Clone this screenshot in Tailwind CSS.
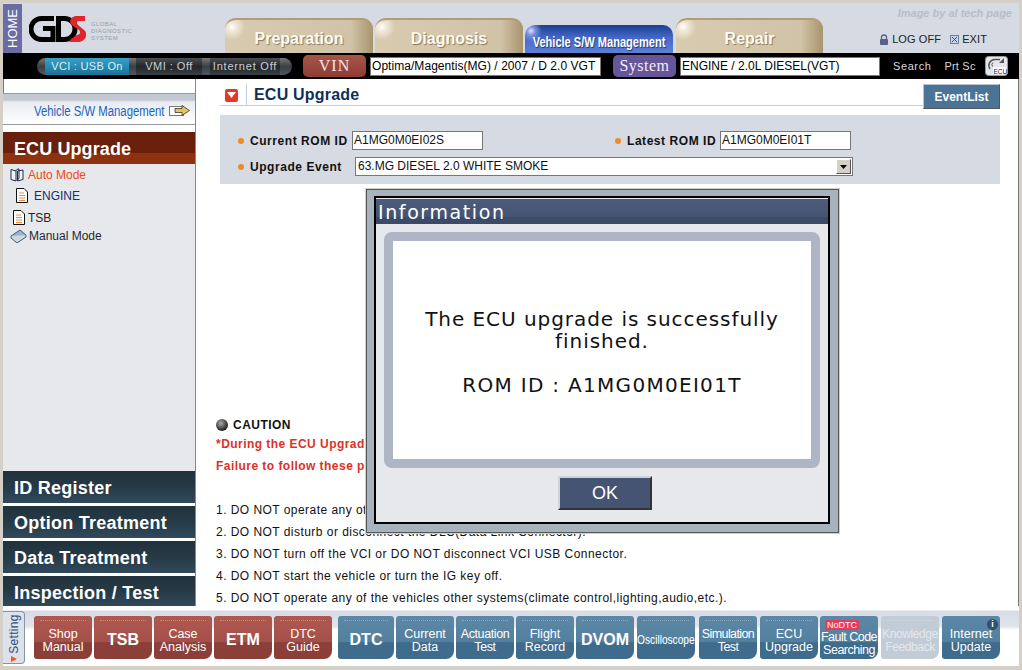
<!DOCTYPE html>
<html lang="en">
<head>
  <meta charset="UTF-8" />
  <title>GDS - ECU Upgrade</title>
  <script src="https://cdn.jsdelivr.net/npm/@tailwindcss/browser@4"></script>
</head>
<body class="bg-white font-['Liberation_Sans',Arial,sans-serif]">
<div class="relative w-[1022px] h-[670px] overflow-hidden flex flex-col bg-white border-t-[3px] border-l-[3px] border-r-[3px] border-b-[4px] border-[#d4d0c8] shadow-[inset_0_1px_0_#777,inset_1px_0_0_#777,inset_-1px_0_0_#777,inset_0_-1px_0_#777]">

  <!-- header -->
  <header class="h-[50px] shrink-0 flex bg-[#d5dae3]">
    <div class="w-[19px] mt-[1px] bg-[#6c6ca5] flex items-center justify-center">
      <span class="-rotate-90 text-white text-[13px] leading-none">HOME</span>
    </div>
    <div class="w-[203px] flex pl-[7px] pt-[13px] items-start">
      <svg width="57" height="26" viewBox="0 0 57 26" fill="none">
        <path d="M25 2.500H12.500a10 10 0 0 0 0 21H24V12.500H14" stroke="#000" stroke-width="5"/>
        <path d="M29.500 2.500h6a10.500 10.500 0 0 1 0 21h-6z" stroke="#000" stroke-width="5"/>
        <path d="M56 0H48c-7 0-9 7-4 10l6 4c2 2 1 5-2 5-3 2-7 4-8 7h9c7 0 11-8 6-12l-6-5c-2-2-1-4 1-4h6z" fill="#e0262b"/>
      </svg>
      <div class="ml-[5px] mt-[5px] text-[6px] leading-[7px] tracking-[0.4px] text-[#9a9fa8]">GLOBAL<br>DIAGNOSTIC<br>SYSTEM</div>
    </div>
    <nav class="flex items-end">
      <div class="w-[148px] h-[35px] mr-[2px] rounded-t-[11px] flex items-center justify-center pt-[5px] text-[16px] font-bold text-[#fbfaf5] [text-shadow:1px_1px_1px_#8a7a5a] border-t-[2px] border-[#b09c78] bg-[radial-gradient(circle_at_7px_7px,#fff_0,#efe6d4_5px,transparent_13px),linear-gradient(90deg,#d9cbb0_0,#d1c3a7_85%,#a8946e_100%)]">Preparation</div>
      <div class="w-[148px] h-[35px] mr-[2px] rounded-t-[11px] flex items-center justify-center pt-[5px] text-[16px] font-bold text-[#fbfaf5] [text-shadow:1px_1px_1px_#8a7a5a] border-t-[2px] border-[#b09c78] bg-[radial-gradient(circle_at_7px_7px,#fff_0,#efe6d4_5px,transparent_13px),linear-gradient(90deg,#d9cbb0_0,#d1c3a7_85%,#a8946e_100%)]">Diagnosis</div>
      <div class="w-[148px] h-[28px] mr-[3px] rounded-t-[10px] flex items-center justify-center pt-[6px] whitespace-nowrap text-[14px] font-bold text-white [text-shadow:1px_1px_1px_#1c3270] bg-[radial-gradient(circle_at_6px_6px,#dfe6ff_0,#7d95e0_4px,transparent_11px),linear-gradient(180deg,#1c3f90_0,#4468c8_45%,#5c80d8_100%)]"><span class="block scale-x-[0.79]">Vehicle S/W Management</span></div>
      <div class="w-[147px] h-[35px] rounded-t-[11px] flex items-center justify-center pt-[5px] text-[16px] font-bold text-[#fbfaf5] [text-shadow:1px_1px_1px_#8a7a5a] border-t-[2px] border-[#b09c78] bg-[radial-gradient(circle_at_7px_7px,#fff_0,#efe6d4_5px,transparent_13px),linear-gradient(90deg,#d9cbb0_0,#d1c3a7_85%,#a8946e_100%)]">Repair</div>
    </nav>
    <div class="flex-1 flex flex-col items-end pr-[7px] pt-[3px]">
      <div class="text-[11px] leading-[14px] font-bold italic text-[#b9bdc5]">Image by al tech page</div>
      <div class="flex items-center mt-[12px] mr-[25px] text-[11px] tracking-[0.1px] leading-[14px] text-[#222]">
        <svg width="10" height="11" viewBox="0 0 10 11" class="mr-[3px]"><path d="M2.500 5V3.500a2.500 2.500 0 0 1 5 0V5" stroke="#55628a" stroke-width="1.300" fill="none"/><rect x="1" y="5" width="8" height="6" rx="1" fill="#55628a"/></svg>
        <span>LOG OFF</span>
        <svg width="9" height="9" viewBox="0 0 9 9" class="ml-[9px] mr-[3px]"><rect x="0.500" y="0.500" width="8" height="8" fill="#c9d2e6" stroke="#6c7fa8"/><path d="M2 2l5 5M7 2l-5 5" stroke="#44557f"/></svg>
        <span>EXIT</span>
      </div>
    </div>
  </header>

  <!-- status bar -->
  <div class="h-[26px] shrink-0 bg-black flex items-center pl-[34px]">
    <div class="w-[255px] h-[17px] rounded-full flex items-center overflow-hidden text-[11px] tracking-[0.5px] text-[#c9ced4] bg-[linear-gradient(180deg,#777_0,#3a3f44_50%,#50565c_100%)]">
      <span class="ml-[8px] w-[84px] h-full flex items-center justify-center tracking-[0.3px] text-[#dbeef5] bg-[linear-gradient(180deg,#3aa0c8,#1a7296)]">VCI : USB On</span>
      <span class="ml-[7px] w-[66px] h-full flex items-center justify-center bg-[linear-gradient(180deg,#4a4f54,#23272b_50%,#3a3f44)]">VMI : Off</span>
      <span class="ml-[8px] w-[70px] h-full flex items-center justify-center tracking-[0.8px] bg-[linear-gradient(180deg,#4a4f54,#23272b_50%,#3a3f44)]">Internet Off</span>
    </div>
    <div class="ml-[11px] w-[63px] h-[22px] rounded-[5px] flex items-center justify-center text-[16px] tracking-[1px] text-[#f3e6e2] bg-[linear-gradient(180deg,#a85448,#8e3d34)] font-['Liberation_Serif',serif]">VIN</div>
    <div class="ml-[4px] w-[231px] h-[19px] bg-white border border-[#777] flex items-center pl-[1px] text-[12px] tracking-[0.05px] text-black">Optima/Magentis(MG) / 2007 / D 2.0 VGT</div>
    <div class="ml-[12px] w-[63px] h-[22px] rounded-[5px] flex items-center justify-center text-[16px] tracking-[0.5px] text-[#f0ecf6] bg-[#67559a] font-['Liberation_Serif',serif]">System</div>
    <div class="ml-[4px] w-[200px] h-[19px] bg-white border border-[#777] flex items-center pl-[1px] text-[12px] text-black">ENGINE / 2.0L DIESEL(VGT)</div>
    <span class="ml-[13px] text-[11px] tracking-[0.6px] text-[#d5d8dc]">Search</span>
    <span class="ml-[13px] text-[11px] tracking-[0.2px] text-[#d5d8dc]">Prt Sc</span>
    <svg width="23" height="20" viewBox="0 0 23 20" class="ml-[9px]"><rect x="0.500" y="0.500" width="22" height="19" rx="3" fill="#e3e6ea" stroke="#999"/><path d="M15 3.500H10a6 6 0 0 0-5 9.500" stroke="#555" stroke-width="1.500" fill="none"/><path d="M8 6.500a3 3 0 0 0-.5 4" stroke="#555" fill="none"/><path d="M14 7l5-5v5z" fill="#555"/><rect x="8" y="11" width="13" height="7" fill="#fff"/><text x="8.500" y="17.500" font-size="6.500" font-family="Liberation Sans" fill="#222">ECU</text></svg>
  </div>

  <div class="flex-1 min-h-0 flex">
    <!-- sidebar -->
    <aside class="w-[193px] shrink-0 flex flex-col border-r border-[#888] pt-[14px]">
      <div class="h-[32px] shrink-0 border-t border-b border-[#999] flex items-center pl-[31px] pt-[5px] whitespace-nowrap text-[14px] text-[#1c63bf] bg-[linear-gradient(180deg,#c3c9d3_0,#c3c9d3_6px,#e8ebf0_8px,#fff_100%)]">
        <span class="block w-[131px] origin-left scale-x-[0.81]">Vehicle S/W Management</span>
        <svg width="22" height="13" viewBox="0 0 22 13" class="ml-[4px] -mt-[3px] shrink-0"><rect x="0.500" y="2.500" width="14" height="9" fill="#fff" stroke="#777"/><path d="M6 4.500h7V1.500l7.500 5-7.500 5v-3H6z" fill="#e7c25e" stroke="#333" stroke-width="0.800"/></svg>
      </div>
      <div class="h-[7px] shrink-0 bg-white"></div>
      <div class="h-[32px] shrink-0 flex items-center pl-[11px] pt-[2px] text-[18px] font-bold tracking-[0.1px] text-white bg-[linear-gradient(180deg,#671f0b_0,#6c200c_65%,#8e310f_66%,#8e310f_100%)]">ECU Upgrade</div>
      <div class="flex-1 bg-[#e6e8ec] text-[12px] pt-[3px]">
        <div class="flex items-center h-[15px] pl-[7px]">
          <svg width="15" height="14" viewBox="0 0 15 14" class="shrink-0"><path d="M1 1.500l5 1.500v10L1 11.500zM13 2v9.500L7.500 13V3z" fill="#eef2f7" stroke="#1f2d45"/><path d="M6 3c0-1 1-2 3-2v9l-2 3" fill="none" stroke="#1f2d45"/></svg>
          <span class="ml-[3px] text-[#f0490f]">Auto Mode</span>
        </div>
        <div class="flex items-center h-[15px] mt-[6px] pl-[13px]">
          <svg width="12" height="15" viewBox="0 0 12 15" class="shrink-0"><path d="M0.500 0.500H8L11.500 4v10.500H0.500z" fill="#fff" stroke="#111"/><path d="M3 5h5M3 7.500h6M3 10h6M3 12.500h6" stroke="#f08a3c" stroke-width="1.200"/></svg>
          <span class="ml-[6px] text-[#1a2f6b]">ENGINE</span>
        </div>
        <div class="flex items-center h-[15px] mt-[7px] pl-[10px]">
          <svg width="12" height="15" viewBox="0 0 12 15" class="shrink-0"><path d="M0.500 0.500H8L11.500 4v10.500H0.500z" fill="#fff" stroke="#111"/><path d="M3 5h5M3 7.500h6M3 10h6M3 12.500h6" stroke="#f08a3c" stroke-width="1.200"/></svg>
          <span class="ml-[3px] text-[#222]">TSB</span>
        </div>
        <div class="flex items-center h-[15px] mt-[3px] pl-[7px]">
          <svg width="17" height="14" viewBox="0 0 17 14" class="shrink-0"><path d="M1 7l9-6 6 5-9 7z" fill="#8fb6d6" stroke="#4a5d70"/><path d="M1 7v2l6 5 9-6V6" fill="#cfd6dd" stroke="#4a5d70"/></svg>
          <span class="ml-[2px] text-[#222a33]">Manual Mode</span>
        </div>
      </div>
      <div class="shrink-0 flex flex-col gap-[3px] bg-white text-[18px] font-bold tracking-[0.25px] text-white">
        <div class="h-[32px] flex items-center pl-[11px] pt-[2px] bg-[linear-gradient(180deg,#20323c_0,#263a46_50%,#30495c_100%)]">ID Register</div>
        <div class="h-[32px] flex items-center pl-[11px] pt-[2px] bg-[linear-gradient(180deg,#20323c_0,#263a46_50%,#30495c_100%)]">Option Treatment</div>
        <div class="h-[32px] flex items-center pl-[11px] pt-[2px] bg-[linear-gradient(180deg,#20323c_0,#263a46_50%,#30495c_100%)]">Data Treatment</div>
        <div class="h-[30px] flex items-center pl-[11px] pt-[4px] bg-[linear-gradient(180deg,#20323c_0,#263a46_50%,#30495c_100%)]">Inspection / Test</div>
      </div>
    </aside>

    <!-- main -->
    <main class="flex-1 min-w-0 flex flex-col pl-[24px] pr-[19px]">
      <div class="h-[36px] shrink-0 flex">
        <div class="w-[703px] h-[27px] pt-[6px] flex items-center border-b border-[#c8ccd4]">
          <div class="ml-[5px] w-[13px] h-[13px] rounded-[2px] bg-[#e23a26] flex items-center justify-center">
            <svg width="9" height="6" viewBox="0 0 9 6"><path d="M0 0h9L4.500 6z" fill="#fff"/></svg>
          </div>
          <div class="ml-[8px] w-px h-[22px] bg-[#c8ccd4]"></div>
          <span class="ml-[7px] text-[16px] font-bold tracking-[0.2px] text-[#0f2f5c]">ECU Upgrade</span>
        </div>
        <div class="w-[77px] h-[25px] mt-[5px] flex items-center justify-center text-[12px] font-bold text-white bg-[#4b7396] border border-t-[#b9c4d0] border-l-[#b9c4d0] border-r-[#555] border-b-[#555]">EventList</div>
      </div>
      <section class="h-[69px] w-[780px] shrink-0 bg-[#d5dae3] pt-[16px] pl-[18px] text-[12px] font-bold tracking-[0.55px] text-[#111]">
        <div class="flex items-center h-[19px]">
          <span class="w-[6px] h-[6px] rounded-full bg-[#f08a24]"></span>
          <span class="ml-[6px] w-[102px]">Current ROM ID</span>
          <div class="w-[131px] h-[19px] bg-white border border-[#777] pl-[1px] leading-[17px] font-normal tracking-normal">A1MG0M0EI02S</div>
          <span class="ml-[132px] w-[6px] h-[6px] rounded-full bg-[#f08a24]"></span>
          <span class="ml-[6px] w-[93px]">Latest ROM ID</span>
          <div class="w-[131px] h-[19px] bg-white border border-[#777] pl-[1px] leading-[17px] font-normal tracking-normal">A1MG0M0EI01T</div>
        </div>
        <div class="flex items-center h-[19px] mt-[7px]">
          <span class="w-[6px] h-[6px] rounded-full bg-[#f08a24]"></span>
          <span class="ml-[6px] w-[105px]">Upgrade Event</span>
          <div class="w-[498px] h-[19px] bg-white border border-[#777] pl-[2px] pb-[1px] flex items-center justify-between font-normal tracking-normal">
            <span>63.MG DIESEL 2.0 WHITE SMOKE</span>
            <span class="w-[15px] h-[15px] mr-[1px] mt-[1px] bg-[#d4d0c8] border border-t-white border-l-white border-r-[#555] border-b-[#555] flex items-center justify-center">
              <svg width="7" height="4" viewBox="0 0 7 4"><path d="M0 0h7L3.500 4z" fill="#000"/></svg>
            </span>
          </div>
        </div>
      </section>
      <section class="mt-[233px] -ml-[4px] text-[12px] tracking-[0.46px] text-[#111]">
        <div class="flex items-center h-[16px] font-bold">
          <span class="w-[12px] h-[12px] rounded-full bg-[radial-gradient(circle_at_40%_35%,#aaa,#222_70%)]"></span>
          <span class="ml-[5px]">CAUTION</span>
        </div>
        <p class="mt-[2px] leading-[19px] font-bold text-[#dc3228]">*During the ECU Upgrade, do not interrupt the process.</p>
        <p class="mt-[3px] leading-[19px] font-bold text-[#dc3228]">Failure to follow these procedures may damage the ECU.</p>
        <ol class="mt-[23px] leading-[22px]">
          <li>1. DO NOT operate any other programs during the upgrade.</li>
          <li>2. DO NOT disturb or disconnect the DLC(Data Link Connector).</li>
          <li>3. DO NOT turn off the VCI or DO NOT disconnect VCI USB Connector.</li>
          <li>4. DO NOT start the vehicle or turn the IG key off.</li>
          <li>5. DO NOT operate any of the vehicles other systems(climate control,lighting,audio,etc.).</li>
        </ol>
      </section>
    </main>
  </div>

  <!-- bottom toolbar -->
  <footer class="h-[60px] shrink-0 flex items-start pt-[10px] text-white text-[12.500px] leading-[13px] text-center bg-[linear-gradient(180deg,#fff_0,#fff_4px,#d8dce6_5px,#dfe3ea_20px,#fff_24px)]">
    <div class="w-[22px] h-[53px] -mt-[5px] rounded-r-[4px] border border-l-0 border-[#8a93a3] bg-[#dde1e9] flex flex-col items-center justify-center">
      <span class="-rotate-90 text-[#2b4f80] text-[12px] tracking-[0.3px] leading-none mt-[14px] mb-[14px]">Setting</span>
      <svg width="6" height="6" viewBox="0 0 6 6" class="mt-[2px]"><path d="M0 0l6 3-6 3z" fill="#f05a20"/></svg>
    </div>
    <div class="ml-[9px] flex">
      <div class="relative w-[58px] h-[43px] mr-[2px] pt-[6px] rounded-t-[3px] rounded-bl-[3px] rounded-br-[8px] flex items-center justify-center bg-[linear-gradient(180deg,#ae584f_0,#a4504a_60%,#8b3f38_62%,#8b3f38_100%)]"><span class="absolute top-[4px] inset-x-[6px] border-t border-dotted border-white/30"></span>Shop<br>Manual</div>
      <div class="relative w-[58px] h-[43px] mr-[2px] pt-[4px] rounded-t-[3px] rounded-bl-[3px] rounded-br-[8px] flex items-center justify-center text-[16px] font-bold bg-[linear-gradient(180deg,#ae584f_0,#a4504a_60%,#8b3f38_62%,#8b3f38_100%)]"><span class="absolute top-[4px] inset-x-[6px] border-t border-dotted border-white/30"></span>TSB</div>
      <div class="relative w-[58px] h-[43px] mr-[2px] pt-[6px] rounded-t-[3px] rounded-bl-[3px] rounded-br-[8px] flex items-center justify-center bg-[linear-gradient(180deg,#ae584f_0,#a4504a_60%,#8b3f38_62%,#8b3f38_100%)]"><span class="absolute top-[4px] inset-x-[6px] border-t border-dotted border-white/30"></span>Case<br>Analysis</div>
      <div class="relative w-[58px] h-[43px] mr-[2px] pt-[4px] rounded-t-[3px] rounded-bl-[3px] rounded-br-[8px] flex items-center justify-center text-[16px] font-bold bg-[linear-gradient(180deg,#ae584f_0,#a4504a_60%,#8b3f38_62%,#8b3f38_100%)]"><span class="absolute top-[4px] inset-x-[6px] border-t border-dotted border-white/30"></span>ETM</div>
      <div class="relative w-[58px] h-[43px] mr-[6px] pt-[6px] rounded-t-[3px] rounded-bl-[3px] rounded-br-[8px] flex items-center justify-center bg-[linear-gradient(180deg,#ae584f_0,#a4504a_60%,#8b3f38_62%,#8b3f38_100%)]"><span class="absolute top-[4px] inset-x-[6px] border-t border-dotted border-white/30"></span>DTC<br>Guide</div>
      <div class="relative w-[56px] h-[43px] mr-[2px] pt-[4px] rounded-t-[3px] rounded-bl-[3px] rounded-br-[8px] flex items-center justify-center text-[16px] font-bold bg-[linear-gradient(180deg,#5c88a6_0,#54809f_60%,#3f6b8c_62%,#3f6b8c_100%)]"><span class="absolute top-[4px] inset-x-[6px] border-t border-dotted border-white/30"></span>DTC</div>
      <div class="relative w-[58px] h-[43px] mr-[2px] pt-[6px] rounded-t-[3px] rounded-bl-[3px] rounded-br-[8px] flex items-center justify-center bg-[linear-gradient(180deg,#5c88a6_0,#54809f_60%,#3f6b8c_62%,#3f6b8c_100%)]"><span class="absolute top-[4px] inset-x-[6px] border-t border-dotted border-white/30"></span>Current<br>Data</div>
      <div class="relative w-[58px] h-[43px] mr-[2px] pt-[6px] rounded-t-[3px] rounded-bl-[3px] rounded-br-[8px] flex items-center justify-center tracking-[-0.4px] bg-[linear-gradient(180deg,#5c88a6_0,#54809f_60%,#3f6b8c_62%,#3f6b8c_100%)]"><span class="absolute top-[4px] inset-x-[6px] border-t border-dotted border-white/30"></span>Actuation<br>Test</div>
      <div class="relative w-[58px] h-[43px] mr-[2px] pt-[6px] rounded-t-[3px] rounded-bl-[3px] rounded-br-[8px] flex items-center justify-center bg-[linear-gradient(180deg,#5c88a6_0,#54809f_60%,#3f6b8c_62%,#3f6b8c_100%)]"><span class="absolute top-[4px] inset-x-[6px] border-t border-dotted border-white/30"></span>Flight<br>Record</div>
      <div class="relative w-[58px] h-[43px] mr-[3px] pt-[4px] rounded-t-[3px] rounded-bl-[3px] rounded-br-[8px] flex items-center justify-center text-[16px] font-bold bg-[linear-gradient(180deg,#5c88a6_0,#54809f_60%,#3f6b8c_62%,#3f6b8c_100%)]"><span class="absolute top-[4px] inset-x-[6px] border-t border-dotted border-white/30"></span>DVOM</div>
      <div class="relative w-[58px] h-[43px] mr-[4px] pt-[4px] rounded-t-[3px] rounded-bl-[3px] rounded-br-[8px] flex items-center justify-center text-[13px] bg-[linear-gradient(180deg,#5c88a6_0,#54809f_60%,#3f6b8c_62%,#3f6b8c_100%)]"><span class="absolute top-[4px] inset-x-[6px] border-t border-dotted border-white/30"></span><span class="block scale-x-[0.78]">Oscilloscope</span></div>
      <div class="relative w-[58px] h-[43px] mr-[3px] pt-[6px] rounded-t-[3px] rounded-bl-[3px] rounded-br-[8px] flex items-center justify-center tracking-[-0.6px] bg-[linear-gradient(180deg,#5c88a6_0,#54809f_60%,#3f6b8c_62%,#3f6b8c_100%)]"><span class="absolute top-[4px] inset-x-[6px] border-t border-dotted border-white/30"></span>Simulation<br>Test</div>
      <div class="relative w-[58px] h-[43px] mr-[2px] pt-[6px] rounded-t-[3px] rounded-bl-[3px] rounded-br-[8px] flex items-center justify-center bg-[linear-gradient(180deg,#5c88a6_0,#54809f_60%,#3f6b8c_62%,#3f6b8c_100%)]"><span class="absolute top-[4px] inset-x-[6px] border-t border-dotted border-white/30"></span>ECU<br>Upgrade</div>
      <div class="relative w-[58px] h-[43px] mr-[3px] rounded-t-[3px] rounded-bl-[3px] rounded-br-[8px] flex flex-col items-center justify-end pb-[2px] tracking-[-0.5px] bg-[linear-gradient(180deg,#5c88a6_0,#54809f_60%,#3f6b8c_62%,#3f6b8c_100%)]">
        <span class="self-start ml-[5px] mb-[1px] px-[2px] h-[10px] rounded-[2px] bg-[#e8395f] text-[9px] leading-[10px] tracking-normal">NoDTC</span>
        <span>Fault Code<br>Searching</span>
      </div>
      <div class="relative w-[58px] h-[43px] mr-[3px] pt-[6px] rounded-t-[3px] rounded-bl-[3px] rounded-br-[8px] flex items-center justify-center text-[12px] tracking-[-0.4px] text-[#e4e8ee] bg-[#c2ccd7]"><span class="absolute top-[4px] inset-x-[6px] border-t border-dotted border-white/30"></span>Knowledge<br>Feedback</div>
      <div class="relative w-[58px] h-[43px] pt-[6px] rounded-t-[3px] rounded-bl-[3px] rounded-br-[8px] flex items-center justify-center bg-[linear-gradient(180deg,#5c88a6_0,#54809f_60%,#3f6b8c_62%,#3f6b8c_100%)]">
        Internet<br>Update
        <span class="absolute top-[3px] right-[2px] w-[11px] h-[11px] rounded-full bg-[#34506c] text-[9px] leading-[11px] font-bold">i</span>
      </div>
    </div>
  </footer>

  <!-- information dialog -->
  <div class="absolute left-[362px] top-[185px] w-[475px] h-[346px] border border-[#d4d0c8] shadow-[inset_0_0_0_1px_#555] bg-[#a6b3bd] pt-[7px] pl-[8px] pr-[9px] pb-[9px]">
    <div class="h-full border-2 border-black bg-[#e6e8ec] flex flex-col">
      <div class="h-[25px] mt-px flex items-center pl-[2px] pt-[2px] text-[19px] tracking-[1.6px] text-white font-['DejaVu_Sans',sans-serif] bg-[linear-gradient(180deg,#4d5c7c_0,#465474_70%,#3c4a68_71%)]">Information</div>
      <div class="mx-[8px] mt-[8px] h-[236px] rounded-[8px] bg-[#aeb5c4] p-[9px]">
        <div class="h-full bg-white flex flex-col items-center pt-[67px] text-[20px] leading-[22px] tracking-[0.95px] text-[#111] text-center font-['DejaVu_Sans',sans-serif]">
          <p>The ECU upgrade is successfully<br>finished.</p>
          <p class="mt-[22px] tracking-[1.3px]">ROM ID : A1MG0M0EI01T</p>
        </div>
      </div>
      <div class="mt-[8px] ml-[182px] w-[94px] h-[34px] flex items-center justify-center text-[18px] text-white bg-[#465474] border-2 border-t-[#cfd3da] border-l-[#cfd3da] border-r-[#333] border-b-[#333]">OK</div>
    </div>
  </div>
</div>
</body>
</html>
